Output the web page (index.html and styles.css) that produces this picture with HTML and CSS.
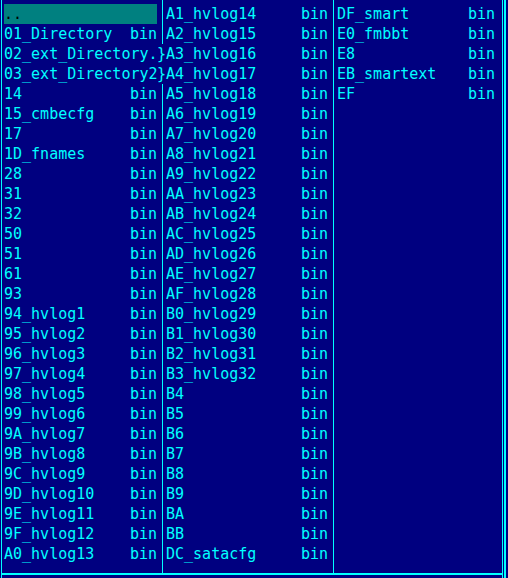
FILE: index.html
```html
<!DOCTYPE html>
<html>
<head>
<meta charset="utf-8">
<link rel="stylesheet" href="styles.css">
</head>
<body>
<div class="screen">
  <div class="vline edge-left"></div>
  <div class="panel">
    <div class="cols">
      <div class="col c1">
        <div class="row sel"><span>..</span></div>
        <div class="row"><span>01_Directory</span><span>bin</span></div>
        <div class="row"><span>02_ext_Directory.</span></div>
        <div class="row"><span>03_ext_Directory2</span></div>
        <div class="row"><span>14</span><span>bin</span></div>
        <div class="row"><span>15_cmbecfg</span><span>bin</span></div>
        <div class="row"><span>17</span><span>bin</span></div>
        <div class="row"><span>1D_fnames</span><span>bin</span></div>
        <div class="row"><span>28</span><span>bin</span></div>
        <div class="row"><span>31</span><span>bin</span></div>
        <div class="row"><span>32</span><span>bin</span></div>
        <div class="row"><span>50</span><span>bin</span></div>
        <div class="row"><span>51</span><span>bin</span></div>
        <div class="row"><span>61</span><span>bin</span></div>
        <div class="row"><span>93</span><span>bin</span></div>
        <div class="row"><span>94_hvlog1</span><span>bin</span></div>
        <div class="row"><span>95_hvlog2</span><span>bin</span></div>
        <div class="row"><span>96_hvlog3</span><span>bin</span></div>
        <div class="row"><span>97_hvlog4</span><span>bin</span></div>
        <div class="row"><span>98_hvlog5</span><span>bin</span></div>
        <div class="row"><span>99_hvlog6</span><span>bin</span></div>
        <div class="row"><span>9A_hvlog7</span><span>bin</span></div>
        <div class="row"><span>9B_hvlog8</span><span>bin</span></div>
        <div class="row"><span>9C_hvlog9</span><span>bin</span></div>
        <div class="row"><span>9D_hvlog10</span><span>bin</span></div>
        <div class="row"><span>9E_hvlog11</span><span>bin</span></div>
        <div class="row"><span>9F_hvlog12</span><span>bin</span></div>
        <div class="row"><span>A0_hvlog13</span><span>bin</span></div>
      </div>
      <div class="col div">
        <div class="row"></div>
        <div class="row"></div>
        <div class="row over">}</div>
        <div class="row over">}</div>
      </div>
      <div class="col c2">
        <div class="row"><span>A1_hvlog14</span><span>bin</span></div>
        <div class="row"><span>A2_hvlog15</span><span>bin</span></div>
        <div class="row"><span>A3_hvlog16</span><span>bin</span></div>
        <div class="row"><span>A4_hvlog17</span><span>bin</span></div>
        <div class="row"><span>A5_hvlog18</span><span>bin</span></div>
        <div class="row"><span>A6_hvlog19</span><span>bin</span></div>
        <div class="row"><span>A7_hvlog20</span><span>bin</span></div>
        <div class="row"><span>A8_hvlog21</span><span>bin</span></div>
        <div class="row"><span>A9_hvlog22</span><span>bin</span></div>
        <div class="row"><span>AA_hvlog23</span><span>bin</span></div>
        <div class="row"><span>AB_hvlog24</span><span>bin</span></div>
        <div class="row"><span>AC_hvlog25</span><span>bin</span></div>
        <div class="row"><span>AD_hvlog26</span><span>bin</span></div>
        <div class="row"><span>AE_hvlog27</span><span>bin</span></div>
        <div class="row"><span>AF_hvlog28</span><span>bin</span></div>
        <div class="row"><span>B0_hvlog29</span><span>bin</span></div>
        <div class="row"><span>B1_hvlog30</span><span>bin</span></div>
        <div class="row"><span>B2_hvlog31</span><span>bin</span></div>
        <div class="row"><span>B3_hvlog32</span><span>bin</span></div>
        <div class="row"><span>B4</span><span>bin</span></div>
        <div class="row"><span>B5</span><span>bin</span></div>
        <div class="row"><span>B6</span><span>bin</span></div>
        <div class="row"><span>B7</span><span>bin</span></div>
        <div class="row"><span>B8</span><span>bin</span></div>
        <div class="row"><span>B9</span><span>bin</span></div>
        <div class="row"><span>BA</span><span>bin</span></div>
        <div class="row"><span>BB</span><span>bin</span></div>
        <div class="row"><span>DC_satacfg</span><span>bin</span></div>
      </div>
      <div class="col div"></div>
      <div class="col c3">
        <div class="row"><span>DF_smart</span><span>bin</span></div>
        <div class="row"><span>E0_fmbbt</span><span>bin</span></div>
        <div class="row"><span>E8</span><span>bin</span></div>
        <div class="row"><span>EB_smartext</span><span>bin</span></div>
        <div class="row"><span>EF</span><span>bin</span></div>
      </div>
    </div>
    <div class="hline"></div>
  </div>
  <div class="vline"></div>
  <div class="gap"></div>
  <div class="vline thick"></div>
</div>
</body>
</html>
```

FILE: styles.css
```css
html, body {
  margin: 0;
  padding: 0;
  background: #000080;
}

.screen {
  display: flex;
  height: 578px;
  width: 508px;
  background: #000080;
  color: #00ffff;
  font-family: "DejaVu Sans Mono", "Liberation Mono", monospace;
  font-size: 15px;
  line-height: 20px;
  overflow: hidden;
}

.vline {
  width: 1px;
  flex: none;
  background: #00ffff;
}

.vline.edge-left {
  margin-left: 1px;
}

.vline.thick {
  width: 2px;
}

.gap {
  width: 1px;
  flex: none;
}

.panel {
  width: 500px;
  flex: none;
  display: flex;
  flex-direction: column;
}

.cols {
  height: 573px;
  display: flex;
  padding-left: 2px;
}

.hline {
  height: 2px;
  background: #00ffff;
}

.col {
  display: flex;
  flex-direction: column;
  padding-top: 4px;
  flex: none;
}

.c1 { width: 153px; }
.c2 { width: 162px; }
.c3 { width: 158px; }

.div {
  width: 9px;
  background: linear-gradient(to right, transparent 5px, #00ffff 5px, #00ffff 6px, transparent 6px);
}

.row {
  height: 20px;
  box-sizing: border-box;
  padding-top: 1px;
  line-height: 19px;
  display: flex;
  justify-content: space-between;
  white-space: pre;
}

.row.over {
  background: #000080;
}

.row.sel {
  background: #008080;
  color: #000000;
}
```
